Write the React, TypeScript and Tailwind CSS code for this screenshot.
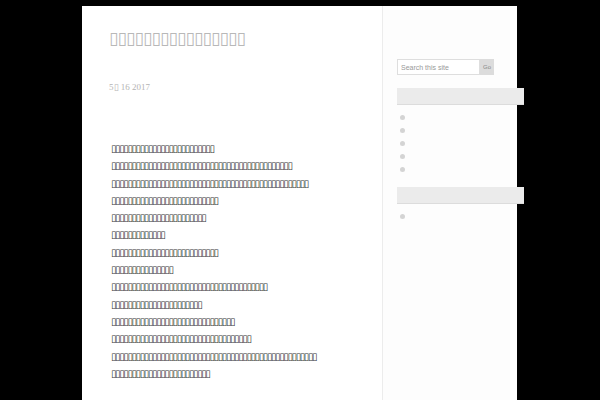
const tofu = (n: number) => "\u25AF".repeat(n);

// box counts per paragraph line, read off the reference
const lines = [25, 44, 48, 26, 23, 13, 26, 15, 38, 22, 30, 34, 50, 24];

const Bar = () => (
  <div className="h-[17px] w-[127px] bg-[#ebebeb] border-b border-[#dcdcdc]" />
);

const Dot = () => (
  <li className="h-[13px] flex items-center">
    <span className="block w-[5px] h-[5px] rounded-full bg-[#d4d4d4]" />
  </li>
);

export default function App() {
  return (
    <div className="w-[600px] h-[400px] overflow-hidden bg-black pt-[6px] pl-[82px]">
      <div className="flex w-[435px] h-[394px] bg-white border-r border-[#e5e5e5]">
        {/* main column */}
        <main className="w-[301px] shrink-0 pl-[27px] pt-[22px] border-r border-[#ececec] font-['DejaVu_Sans',sans-serif]">
          <h1 className="text-[17px] leading-[20px] tracking-[-0.85px] text-[#b8b8b8] whitespace-nowrap">
            {tofu(16)}
          </h1>
          <p className="mt-[33px] text-[9px] leading-[12px] text-[#b4b4b4] font-['Liberation_Serif',serif]">
            5{"\u25AF"} 16 2017
          </p>
          <div className="mt-[47px] pl-[2px]">
            {lines.map((n, i) => (
              <p
                key={i}
                className="text-[10px] leading-[17.3px] tracking-[-1.4px] text-[#333] whitespace-nowrap"
              >
                {tofu(n)}
              </p>
            ))}
          </div>
        </main>

        {/* sidebar */}
        <aside className="w-[134px] shrink-0 bg-[#fdfdfd] pl-[14px] pt-[53px] font-['Liberation_Sans',sans-serif]">
          <form className="flex h-[16px] w-[97px]">
            <input
              className="w-[83px] h-full border border-[#dedede] bg-white px-[3px] text-[7px] text-[#999] placeholder:text-[#999] outline-none"
              placeholder="Search this site"
            />
            <button
              type="button"
              className="w-[14px] h-full bg-[#dcdcdc] text-[6px] text-[#888]"
            >
              Go
            </button>
          </form>
          <div className="mt-[13px]">
            <Bar />
          </div>
          <ul className="mt-[6px] pl-[3px]">
            <Dot />
            <Dot />
            <Dot />
            <Dot />
            <Dot />
          </ul>
          <div className="mt-[11px]">
            <Bar />
          </div>
          <ul className="mt-[6px] pl-[3px]">
            <Dot />
          </ul>
        </aside>
      </div>
    </div>
  );
}
